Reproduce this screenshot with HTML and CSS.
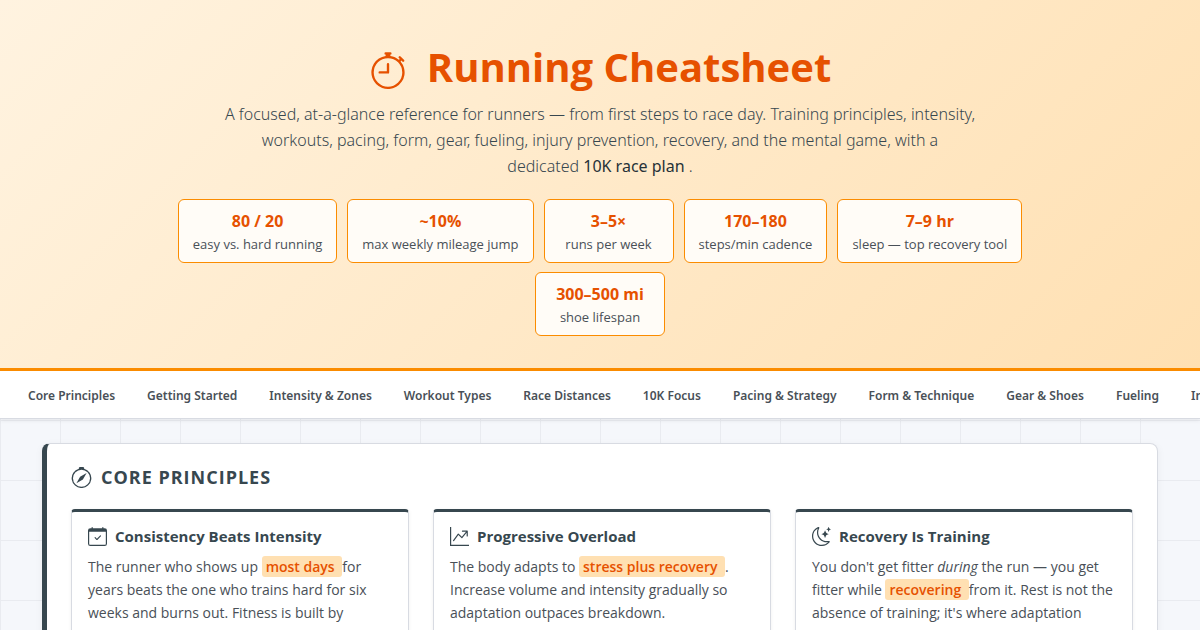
FILE: index.html
```html
<!DOCTYPE html>
<html lang="en">
<head>
<meta charset="UTF-8">
<meta name="viewport" content="width=device-width, initial-scale=1.0">
<title>Running Cheatsheet</title>
<link rel="stylesheet" href="styles.css">
</head>
<body>

<header class="hero">
  <h1>
    <svg class="icon" viewBox="0 0 16 16" aria-hidden="true"><path d="M8.5 5.6a.5.5 0 1 0-1 0v2.9h-3a.5.5 0 0 0 0 1H8a.5.5 0 0 0 .5-.5z"/><path d="M6.5 1A.5.5 0 0 1 7 .5h2a.5.5 0 0 1 0 1v.57c1.36.196 2.594.78 3.584 1.64l.012-.013.354-.354-.354-.353a.5.5 0 0 1 .707-.708l1.414 1.415a.5.5 0 1 1-.707.707l-.353-.354-.354.354-.013.012A7 7 0 1 1 7 2.071V1.5a.5.5 0 0 1-.5-.5M8 3a6 6 0 1 0 .001 12A6 6 0 0 0 8 3"/></svg>
    Running Cheatsheet
  </h1>
  <p class="lead">A focused, at-a-glance reference for runners — from first steps to race day. Training principles, intensity, workouts, pacing, form, gear, fueling, injury prevention, recovery, and the mental game, with a dedicated&nbsp;<strong>10K race plan</strong> .</p>
  <div class="stats">
    <div class="stat"><strong>80 / 20</strong><span>easy vs. hard running</span></div>
    <div class="stat"><strong>~10%</strong><span>max weekly mileage jump</span></div>
    <div class="stat"><strong>3–5×</strong><span>runs per week</span></div>
    <div class="stat"><strong>170–180</strong><span>steps/min cadence</span></div>
    <div class="stat"><strong>7–9 hr</strong><span>sleep — top recovery tool</span></div>
    <div class="stat"><strong>300–500 mi</strong><span>shoe lifespan</span></div>
  </div>
</header>

<nav class="topnav">
  <a href="#principles">Core Principles</a>
  <a href="#start">Getting Started</a>
  <a href="#zones">Intensity &amp; Zones</a>
  <a href="#workouts">Workout Types</a>
  <a href="#distances">Race Distances</a>
  <a href="#tenk">10K Focus</a>
  <a href="#pacing">Pacing &amp; Strategy</a>
  <a href="#form">Form &amp; Technique</a>
  <a href="#gear">Gear &amp; Shoes</a>
  <a href="#fueling">Fueling</a>
  <a href="#injury">Injury Prevention</a>
</nav>

<main>
  <section class="section" id="principles">
    <h2>
      <svg class="icon" viewBox="0 0 16 16" aria-hidden="true"><path d="M8 16.016a7.5 7.5 0 0 0 1.962-14.74A1 1 0 0 0 9 0H7a1 1 0 0 0-.962 1.276A7.5 7.5 0 0 0 8 16.016m6.5-7.5a6.5 6.5 0 1 1-13 0 6.5 6.5 0 0 1 13 0"/><path d="m6.94 7.44 4.95-2.83-2.83 4.95-4.949 2.83 2.828-4.95z"/></svg>
      Core Principles
    </h2>
    <div class="cards">
      <article class="card">
        <h3>
          <svg class="icon" viewBox="0 0 16 16" aria-hidden="true"><path d="M10.854 7.146a.5.5 0 0 1 0 .708l-3 3a.5.5 0 0 1-.708 0l-1.5-1.5a.5.5 0 1 1 .708-.708L7.5 9.793l2.646-2.647a.5.5 0 0 1 .708 0"/><path d="M3.5 0a.5.5 0 0 1 .5.5V1h8V.5a.5.5 0 0 1 1 0V1h1a2 2 0 0 1 2 2v11a2 2 0 0 1-2 2H2a2 2 0 0 1-2-2V3a2 2 0 0 1 2-2h1V.5a.5.5 0 0 1 .5-.5M1 4v10a1 1 0 0 0 1 1h12a1 1 0 0 0 1-1V4z"/></svg>
          Consistency Beats Intensity
        </h3>
        <p>The runner who shows up <mark>most days </mark>for years beats the one who trains hard for six weeks and burns out. Fitness is built by accumulation.</p>
      </article>
      <article class="card">
        <h3>
          <svg class="icon" viewBox="0 0 16 16" aria-hidden="true"><path d="M0 0h1v15h15v1H0zm10 3.5a.5.5 0 0 1 .5-.5h4a.5.5 0 0 1 .5.5v4a.5.5 0 0 1-1 0V4.9l-3.613 4.417a.5.5 0 0 1-.74.037L7.06 6.767l-3.656 5.027a.5.5 0 0 1-.808-.588l4-5.5a.5.5 0 0 1 .758-.06l2.609 2.61L13.445 4H10.5a.5.5 0 0 1-.5-.5"/></svg>
          Progressive Overload
        </h3>
        <p>The body adapts to <mark>stress plus recovery </mark>. Increase volume and intensity gradually so adaptation outpaces breakdown.</p>
      </article>
      <article class="card">
        <h3>
          <svg class="icon" viewBox="0 0 16 16" aria-hidden="true"><path d="M6 .278a.77.77 0 0 1 .08.858 7.2 7.2 0 0 0-.878 3.46c0 4.021 3.278 7.277 7.318 7.277q.792-.001 1.533-.16a.79.79 0 0 1 .81.316.73.73 0 0 1-.031.893A8.35 8.35 0 0 1 8.344 16C3.734 16 0 12.286 0 7.71 0 4.266 2.114 1.312 5.124.06A.75.75 0 0 1 6 .278M4.858 1.311A7.27 7.27 0 0 0 1.025 7.71c0 4.02 3.279 7.276 7.319 7.276a7.32 7.32 0 0 0 5.205-2.162q-.506.063-1.029.063c-4.61 0-8.343-3.714-8.343-8.29 0-1.167.242-2.278.681-3.286"/><path d="M10.794 3.148a.217.217 0 0 1 .412 0l.387 1.162c.173.518.579.924 1.097 1.097l1.162.387a.217.217 0 0 1 0 .412l-1.162.387a1.73 1.73 0 0 0-1.097 1.097l-.387 1.162a.217.217 0 0 1-.412 0l-.387-1.162A1.73 1.73 0 0 0 9.31 6.593l-1.162-.387a.217.217 0 0 1 0-.412l1.162-.387a1.73 1.73 0 0 0 1.097-1.097zM13.863.099a.145.145 0 0 1 .274 0l.258.774c.115.346.386.617.732.732l.774.258a.145.145 0 0 1 0 .274l-.774.258a1.16 1.16 0 0 0-.732.732l-.258.774a.145.145 0 0 1-.274 0l-.258-.774a1.16 1.16 0 0 0-.732-.732l-.774-.258a.145.145 0 0 1 0-.274l.774-.258c.346-.115.617-.386.732-.732z"/></svg>
          Recovery Is Training
        </h3>
        <p>You don't get fitter <em>during</em> the run — you get fitter while <mark>recovering </mark>from it. Rest is not the absence of training; it's where adaptation happens.</p>
      </article>
    </div>
  </section>
</main>

</body>
</html>
```
FILE: styles.css
```css
* {
  box-sizing: border-box;
}
body {
  margin: 0;
  font-family: "Segoe UI", "Open Sans", "Noto Sans", sans-serif;
  font-size: 14px;
  color: #495057;
  background-color: #f5f7fb;
  background-image:
    linear-gradient(#e9ebf0 1px, transparent 1px),
    linear-gradient(90deg, #e9ebf0 1px, transparent 1px);
  background-size: 60px 60px;
}
.icon {
  flex: none;
  width: 1em;
  height: 1em;
  fill: currentColor;
}

/* header */
.hero {
  padding: 40px 24px 32px;
  text-align: center;
  background: linear-gradient(135deg, #fff3e0, #ffe0b2);
  border-bottom: 3px solid #fb8c00;
}
.hero h1 {
  display: flex;
  align-items: center;
  justify-content: center;
  gap: 20px;
  margin: 0 0 7px;
  font-size: 40px;
  line-height: 54px;
  color: #e65100;
}
.hero h1 .icon {
  width: 38px;
  height: 38px;
  margin-top: 6px;
}
.lead {
  max-width: 764px;
  margin: 0 auto 20px;
  font-family: "Segoe UI", "Noto Sans", sans-serif;
  font-size: 16px;
  font-weight: 300;
  line-height: 26px;
  color: #37474f;
}
.lead strong {
  font-weight: 400;
  color: #263238;
}
.stats {
  display: flex;
  flex-wrap: wrap;
  justify-content: center;
  gap: 9px 10px;
  max-width: 900px;
  margin: 0 auto;
}
.stat {
  display: flex;
  flex-direction: column;
  min-width: 130px;
  padding: 9px 14px 7px;
  background: #fffcf7;
  border: 1px solid #fb8c00;
  border-radius: 6px;
}
.stat strong {
  font-size: 16px;
  line-height: 24px;
  color: #e65100;
}
.stat span {
  font-size: 13px;
  line-height: 22px;
}

/* navigation */
.topnav {
  display: flex;
  gap: 32px;
  padding: 15px 28px 13px;
  overflow: hidden;
  background: #fff;
  border-bottom: 1px solid #d8dbe2;
  box-shadow: 0 2px 4px rgba(0,0,0,0.06);
}
.topnav a {
  font-family: "Segoe UI", "Noto Sans", sans-serif;
  font-size: 12px;
  font-weight: 600;
  line-height: 19px;
  color: #495057;
  white-space: nowrap;
  text-decoration: none;
}

/* content */
main {
  max-width: 1164px;
  margin: 0 auto;
  padding: 24px;
}
.section {
  padding: 20px 24px 24px;
  background: #fff;
  border: 1px solid #d8dbe2;
  border-left: 5px solid #37474f;
  border-radius: 8px;
  box-shadow: 0 2px 8px rgba(0,0,0,0.05);
}
.section h2 {
  display: flex;
  align-items: center;
  gap: 9px;
  margin: 0 0 18px;
  font-size: 18px;
  line-height: 27px;
  letter-spacing: 1px;
  text-transform: uppercase;
  color: #37474f;
}
.section h2 .icon {
  width: 21px;
  height: 21px;
}
.cards {
  display: grid;
  grid-template-columns: repeat(3, 1fr);
  gap: 24px;
}
.card {
  padding: 12px 16px;
  background: #fff;
  border: 1px solid #d8dbe2;
  border-top: 3px solid #37474f;
  border-radius: 4px;
  box-shadow: 0 1px 4px rgba(0,0,0,0.06);
}
.card h3 {
  display: flex;
  align-items: center;
  gap: 8px;
  margin: 0 0 6px;
  font-size: 15px;
  line-height: 25px;
  color: #37474f;
}
.card h3 .icon {
  width: 19px;
  height: 19px;
}
.card p {
  margin: 0;
  line-height: 23px;
}
mark {
  padding: 1px 4px;
  font-weight: 600;
  color: #e65100;
  background: #ffe0b2;
  border-radius: 3px;
}
```
